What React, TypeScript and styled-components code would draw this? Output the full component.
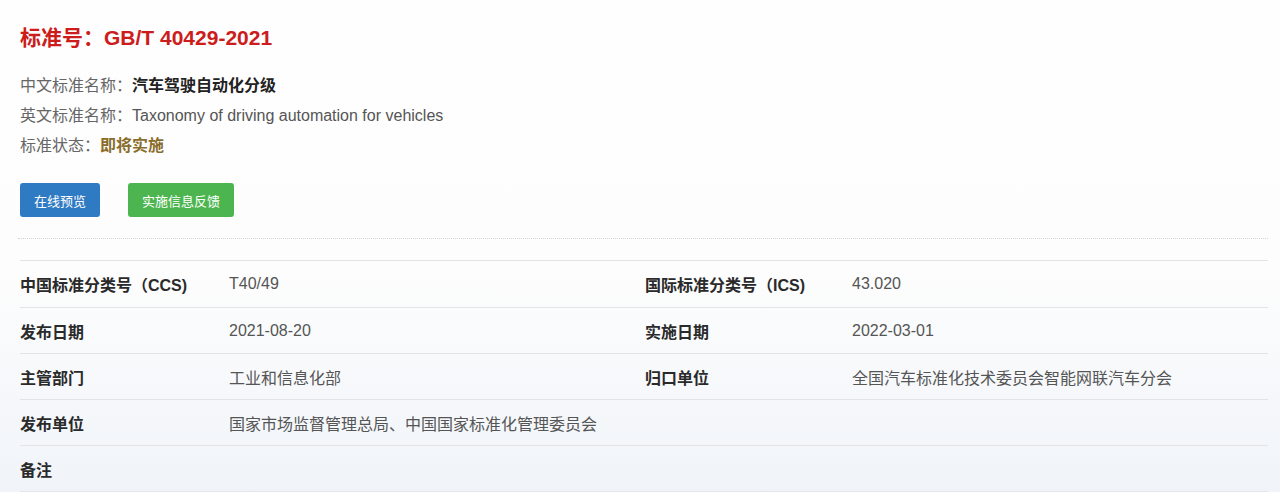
import React from 'react';
import styled, { createGlobalStyle } from 'styled-components';

const GlobalStyle = createGlobalStyle`
  html, body {
    margin: 0;
    padding: 0;
  }
  body {
    font-family: "Liberation Sans", "Noto Sans CJK SC", sans-serif;
    background: linear-gradient(180deg, #fefefe 0%, #fdfdfd 55%, #f0f4f9 100%);
    min-height: 492px;
  }
`;

const Page = styled.div`
  padding: 24px 12px 0 20px;
  min-height: 468px;
`;

const Title = styled.h1`
  margin: 0;
  font-size: 21px;
  line-height: 28px;
  font-weight: bold;
  color: #cc1c1c;
`;

const InfoList = styled.div`
  margin-top: 19px;
  display: flex;
  flex-direction: column;
`;

const InfoRow = styled.div`
  font-size: 16px;
  line-height: 30px;
  color: #666;
`;

const InfoValue = styled.span<{ $tone?: 'strong' | 'plain' | 'status' }>`
  color: ${({ $tone }) =>
    $tone === 'strong' ? '#222' : $tone === 'status' ? '#8a6d2b' : '#555'};
  font-weight: ${({ $tone }) => ($tone === 'plain' ? 'normal' : 'bold')};
`;

const Actions = styled.div`
  margin-top: 22px;
  display: flex;
  gap: 28px;
`;

const Button = styled.button<{ $variant: 'primary' | 'success' }>`
  height: 34px;
  padding: 0 14px;
  border: none;
  border-radius: 3px;
  font-family: inherit;
  font-size: 13px;
  color: #fff;
  background: ${({ $variant }) => ($variant === 'primary' ? '#2f7bc3' : '#4db550')};
  cursor: pointer;
`;

const DottedRule = styled.hr`
  margin: 21px 0 0 -2px;
  border: none;
  border-top: 1px dotted #d4d4d4;
`;

const Table = styled.div`
  margin-top: 21px;
  display: grid;
  grid-template-columns: 209px 416px 207px 1fr;
  border-top: 1px solid #e4e4e4;
`;

const Cell = styled.div<{ $label?: boolean; $span?: number; $first?: boolean }>`
  height: ${({ $first }) => ($first ? 46 : 45)}px;
  display: flex;
  align-items: center;
  border-bottom: 1px solid #e4e4e4;
  font-size: 16px;
  color: ${({ $label }) => ($label ? '#2a2a2a' : '#555')};
  font-weight: ${({ $label }) => ($label ? 'bold' : 'normal')};
  grid-column: span ${({ $span }) => $span || 1};
`;

const rows: [string, string, string?, string?][] = [
  ['中国标准分类号（CCS)', 'T40/49', '国际标准分类号（ICS)', '43.020'],
  ['发布日期', '2021-08-20', '实施日期', '2022-03-01'],
  ['主管部门', '工业和信息化部', '归口单位', '全国汽车标准化技术委员会智能网联汽车分会'],
  ['发布单位', '国家市场监督管理总局、中国国家标准化管理委员会'],
  ['备注', ''],
];

export default function App() {
  return (
    <>
      <GlobalStyle />
      <Page>
        <Title>标准号：GB/T 40429-2021</Title>
        <InfoList>
          <InfoRow>
            中文标准名称：<InfoValue $tone="strong">汽车驾驶自动化分级</InfoValue>
          </InfoRow>
          <InfoRow>
            英文标准名称：<InfoValue $tone="plain">Taxonomy of driving automation for vehicles</InfoValue>
          </InfoRow>
          <InfoRow>
            标准状态：<InfoValue $tone="status">即将实施</InfoValue>
          </InfoRow>
        </InfoList>
        <Actions>
          <Button $variant="primary">在线预览</Button>
          <Button $variant="success">实施信息反馈</Button>
        </Actions>
        <DottedRule />
        <Table>
          {rows.map(([l1, v1, l2, v2], i) => (
            <React.Fragment key={l1}>
              <Cell $label $first={i === 0}>{l1}</Cell>
              {l2 ? (
                <>
                  <Cell $first={i === 0}>{v1}</Cell>
                  <Cell $label $first={i === 0}>{l2}</Cell>
                  <Cell $first={i === 0}>{v2}</Cell>
                </>
              ) : (
                <Cell $span={3}>{v1}</Cell>
              )}
            </React.Fragment>
          ))}
        </Table>
      </Page>
    </>
  );
}
